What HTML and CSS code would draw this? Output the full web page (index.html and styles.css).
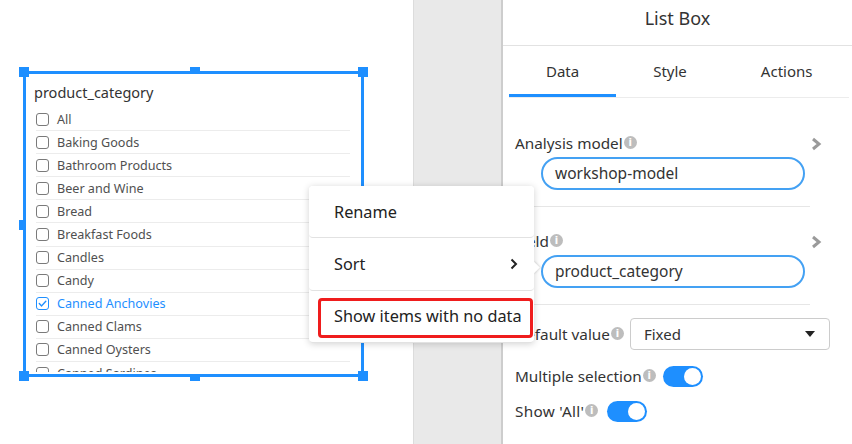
FILE: index.html
```html
<!DOCTYPE html>
<html>
<head>
<meta charset="utf-8">
<link rel="stylesheet" href="styles.css">
</head>
<body>
<div class="app">
  <div class="canvas">
    <div class="listbox">
      <div class="lb-title">product_category</div>
      <ul class="lb-items">
        <li class="item"><span class="cb"></span>All</li>
        <li class="item"><span class="cb"></span>Baking Goods</li>
        <li class="item"><span class="cb"></span>Bathroom Products</li>
        <li class="item"><span class="cb"></span>Beer and Wine</li>
        <li class="item"><span class="cb"></span>Bread</li>
        <li class="item"><span class="cb"></span>Breakfast Foods</li>
        <li class="item"><span class="cb"></span>Candles</li>
        <li class="item"><span class="cb"></span>Candy</li>
        <li class="item checked"><span class="cb"><svg viewBox="0 0 13 13" width="13" height="13"><path d="M3.3 6.6 L5.6 8.9 L9.8 4.2" fill="none" stroke="#1e8fff" stroke-width="1.4" stroke-linecap="round" stroke-linejoin="round"/></svg></span>Canned Anchovies</li>
        <li class="item"><span class="cb"></span>Canned Clams</li>
        <li class="item"><span class="cb"></span>Canned Oysters</li>
        <li class="item"><span class="cb"></span>Canned Sardines</li>
      </ul>
      <span class="handle h-tl"></span>
      <span class="handle h-tr"></span>
      <span class="handle h-bl"></span>
      <span class="handle h-br"></span>
      <span class="handle h-tm"></span>
      <span class="handle h-bm"></span>
      <span class="handle h-lm"></span>
      <span class="handle h-rm"></span>
    </div>
  </div>
  <div class="gutter"></div>
  <div class="panel">
    <div class="panel-head">List Box</div>
    <div class="tabs">
      <div class="tab active">Data</div>
      <div class="tab">Style</div>
      <div class="tab">Actions</div>
    </div>
    <div class="section first">
      <div class="label-row">
        <span class="label">Analysis model<i class="info">i</i></span>
        <svg class="chev" viewBox="0 0 11 14" width="11" height="14"><polyline points="2,2 8,7 2,12" fill="none" stroke="#9a9a9a" stroke-width="3"/></svg>
      </div>
      <div class="pill">workshop-model</div>
    </div>
    <div class="section">
      <div class="label-row">
        <span class="label">Field<i class="info">i</i></span>
        <svg class="chev" viewBox="0 0 11 14" width="11" height="14"><polyline points="2,2 8,7 2,12" fill="none" stroke="#9a9a9a" stroke-width="3"/></svg>
      </div>
      <div class="pill">product_category</div>
    </div>
    <div class="row row-default">
      <span class="label">Default value<i class="info">i</i></span>
      <div class="select"><span>Fixed</span><span class="caret"></span></div>
    </div>
    <div class="row row-multi">
      <span class="label">Multiple selection<i class="info">i</i></span>
      <span class="toggle"><span class="knob"></span></span>
    </div>
    <div class="row row-all">
      <span class="label">Show 'All'<i class="info">i</i></span>
      <span class="toggle"><span class="knob"></span></span>
    </div>
  </div>

  <div class="menu">
    <div class="menu-item">Rename</div>
    <div class="menu-item sort">Sort<svg viewBox="0 0 8 12" width="8" height="12"><polyline points="1.5,1.5 6,6 1.5,10.5" fill="none" stroke="#222" stroke-width="2"/></svg></div>
    <div class="menu-item">Show items with no data</div>
    <div class="highlight"></div>
  </div>
</div>
</body>
</html>
```

FILE: styles.css
```css
html, body {
  margin: 0;
  padding: 0;
  background: #fff;
}

body {
  font-family: "Noto Sans", "Open Sans", sans-serif;
  color: #333;
}

.app {
  position: relative;
  display: flex;
  width: 852px;
  height: 444px;
  overflow: hidden;
  background: #fff;
}

/* ---------- canvas ---------- */
.canvas {
  width: 413px;
  flex: none;
}

.listbox {
  position: relative;
  box-sizing: border-box;
  width: 341px;
  height: 306px;
  margin: 71px 0 0 23px;
  border: 3px solid #1e8fff;
  padding: 0 11px 2px 10px;
  display: flex;
  flex-direction: column;
  background: #fff;
}

.lb-title {
  flex: none;
  height: 20px;
  padding: 8px 0 6px;
  margin-left: -2px;
  font-size: 14.5px;
  line-height: 20px;
  color: #333;
}

.lb-items {
  flex: 1;
  min-height: 0;
  overflow: hidden;
  list-style: none;
  margin: 0;
  padding: 0;
}

.item {
  height: 22.1px;
  border-bottom: 1px solid #ececec;
  display: flex;
  align-items: center;
  gap: 8px;
  font-size: 12.6px;
  color: #505050;
  white-space: nowrap;
}

.cb {
  box-sizing: border-box;
  width: 13px;
  height: 13px;
  flex: none;
  border: 1px solid #7a7a7a;
  border-radius: 3px;
  background: #fff;
  display: flex;
}

.cb svg {
  margin: -1px;
}

.item.checked {
  color: #1e8fff;
}

.item.checked .cb {
  border-color: #1e8fff;
}

.handle {
  position: absolute;
  background: #1e8fff;
}

.h-tl, .h-tr, .h-bl, .h-br {
  width: 10px;
  height: 10px;
}

.h-tl { left: -7px; top: -7px; }
.h-tr { right: -7px; top: -7px; }
.h-bl { left: -7px; bottom: -7px; }
.h-br { right: -7px; bottom: -7px; }

.h-tm { left: 164px; top: -7px; width: 10px; height: 5px; }
.h-bm { left: 164px; bottom: -7px; width: 10px; height: 5px; }
.h-lm { left: -7px; top: 146px; width: 5px; height: 10px; }
.h-rm { right: -7px; top: 146px; width: 5px; height: 10px; }

/* ---------- gutter ---------- */
.gutter {
  flex: none;
  width: 90px;
  box-sizing: border-box;
  background: #e9e9e9;
  border-left: 1px solid #dcdcdc;
  border-right: 2px solid #cdcdcd;
}

/* ---------- property panel ---------- */
.panel {
  flex: 1;
  min-width: 0;
  display: flex;
  flex-direction: column;
}

.panel-head {
  height: 45px;
  border-bottom: 1px solid #e2e2e2;
  text-align: center;
  font-size: 18px;
  line-height: 36px;
  color: #333;
}

.tabs {
  display: flex;
  height: 51px;
  margin: 0 3px 0 6px;
  border-bottom: 1px solid #ececec;
}

.tab {
  padding: 0 37px;
  font-size: 15px;
  line-height: 51px;
  color: #333;
}

.tab.active {
  box-shadow: inset 0 -3px 0 #1e8fff;
}

.section {
  width: 295px;
  margin-left: 12px;
  padding: 24px 0 16px;
  border-bottom: 1px solid #e6e6e6;
}

.section.first {
  padding-top: 35px;
}

.label-row {
  display: flex;
  justify-content: space-between;
  align-items: center;
  margin-right: -12px;
  height: 20px;
}

.label {
  display: inline-flex;
  align-items: center;
  font-size: 15.3px;
  line-height: 20px;
  color: #333;
  white-space: nowrap;
}

.info {
  display: inline-flex;
  align-items: center;
  justify-content: center;
  width: 13px;
  height: 13px;
  margin-left: 1px;
  margin-top: -1px;
  border-radius: 50%;
  background: #bdbdbd;
  color: #fff;
  font-style: normal;
  font-weight: bold;
  font-size: 10px;
  line-height: 13px;
  font-family: "DejaVu Sans", sans-serif;
}

.chev {
  flex: none;
  margin-top: 2px;
}

.pill {
  box-sizing: border-box;
  width: 264px;
  height: 33px;
  margin: 4px 0 0 26px;
  border: 2px solid #44a1f3;
  border-radius: 17px;
  padding-left: 12px;
  font-size: 15.5px;
  line-height: 29px;
  color: #333;
}

.row {
  display: flex;
  align-items: center;
  margin-left: 12px;
}

.row-default {
  margin-top: 13px;
  height: 32px;
}

.row-multi {
  margin-top: 15px;
  height: 22px;
}

.row-all {
  margin-top: 13px;
  height: 22px;
}

.select {
  box-sizing: border-box;
  width: 200px;
  height: 32px;
  margin-left: 6px;
  border: 1px solid #cccccc;
  border-radius: 4px;
  display: flex;
  align-items: center;
  justify-content: space-between;
  padding: 0 14px 0 13px;
  font-size: 15px;
  color: #333;
}

.caret {
  width: 0;
  height: 0;
  border-left: 5px solid transparent;
  border-right: 5px solid transparent;
  border-top: 6px solid #222;
}

.toggle {
  box-sizing: border-box;
  width: 40px;
  height: 21px;
  margin-left: 7px;
  border-radius: 11px;
  background: #1e8fff;
  display: flex;
  justify-content: flex-end;
  align-items: center;
  padding-right: 2px;
}

.row-all .toggle {
  margin-left: 9px;
}

.row-all .label {
  letter-spacing: 0.3px;
}

.knob {
  width: 17px;
  height: 17px;
  border-radius: 50%;
  background: #fff;
}

/* ---------- context menu ---------- */
.menu {
  position: absolute;
  left: 309px;
  top: 186px;
  width: 225px;
  height: 157px;
  background: #fff;
  border-radius: 4px;
  box-shadow: 0 1px 7px rgba(0, 0, 0, 0.18);
  display: flex;
  flex-direction: column;
}

.menu::before {
  content: "";
  position: absolute;
  right: -4px;
  top: 77px;
  width: 9px;
  height: 9px;
  background: #fff;
  transform: rotate(45deg);
  box-shadow: 1px -1px 2px rgba(0, 0, 0, 0.12);
}

.menu-item {
  position: relative;
  height: 52px;
  display: flex;
  align-items: center;
  justify-content: space-between;
  padding: 0 16px 0 25px;
  font-size: 16.3px;
  color: #222;
  border-bottom: 1px solid #e2e2e2;
  background: #fff;
  border-radius: 4px;
  white-space: nowrap;
}

.menu-item:last-of-type {
  border-bottom: none;
  height: 51px;
  padding-right: 0;
}

.highlight {
  position: absolute;
  left: 9px;
  top: 112px;
  width: 215px;
  height: 40px;
  box-sizing: border-box;
  border: 3px solid #ef1d1d;
  border-radius: 4px;
}
```
